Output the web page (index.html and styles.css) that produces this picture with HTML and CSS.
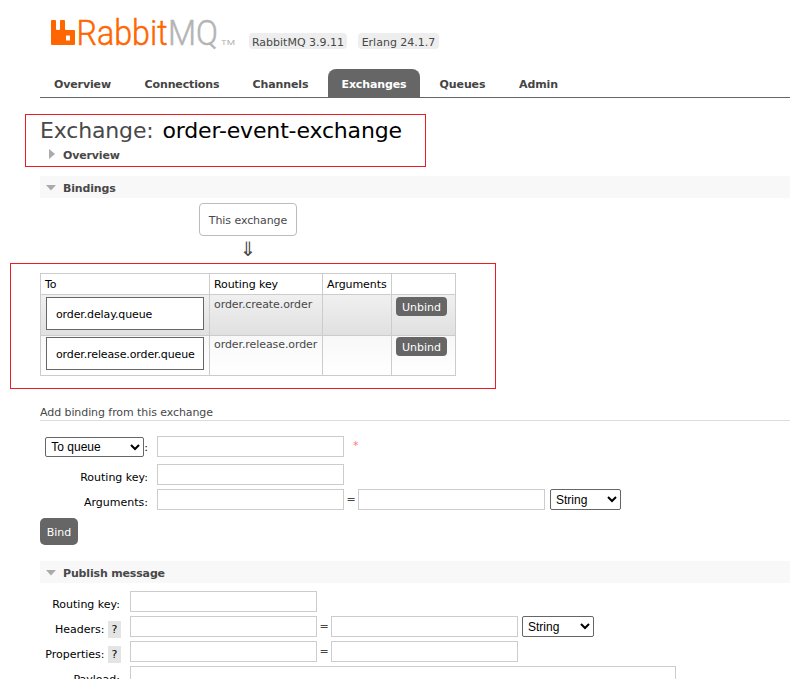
FILE: index.html
```html
<!DOCTYPE html>
<html lang="en">
<head>
<meta charset="utf-8">
<title>RabbitMQ Management</title>
<link rel="stylesheet" href="styles.css">
</head>
<body>
<header class="top">
  <svg class="logo" width="186" height="44" viewBox="0 -6 186 44">
    <path fill="#f60" d="M1 5q0-1 1-1h3q1 0 1 1v8q0 1 1 1h2q1 0 1-1V5q0-1 1-1h3q1 0 1 1v8q0 1 1 1h8q1 0 1 1v13q0 1-1 1H2q-1 0-1-1zM16 20v4q0 .5.5.5h3q.5 0 .5-.5v-4q0-.5-.5-.5h-3q-.5 0-.5.5z"/>
    <text class="word rabbit" x="26.500" y="29" textLength="91" lengthAdjust="spacingAndGlyphs">Rabbit</text>
    <text class="word mq" x="118" y="29" textLength="50" lengthAdjust="spacingAndGlyphs">MQ</text>
    <text class="tm" x="171" y="29" textLength="14" lengthAdjust="spacingAndGlyphs">TM</text>
  </svg>
  <span class="version v1">RabbitMQ 3.9.11</span>
  <span class="version v2">Erlang 24.1.7</span>
</header>
<nav class="tabs">
  <a class="t1">Overview</a><a class="t2">Connections</a><a class="t3">Channels</a><a class="t4 selected">Exchanges</a><a class="t5">Queues</a><a class="t6">Admin</a>
</nav>
<main>
  <div class="title-frame">
    <h1>Exchange: <b>order-event-exchange</b></h1>
    <h2 class="closed"><svg width="6" height="10"><path fill="#aaa" d="M0 0l6 5-6 5z"/></svg><span>Overview</span></h2>
  </div>
  <h2 class="bar"><svg width="10" height="6"><path fill="#aaa" d="M0 0h10L5 5.500z"/></svg><span>Bindings</span></h2>
  <div class="source">
    <span class="exchange">This exchange</span>
    <span class="arrow">⇓</span>
  </div>
  <div class="table-frame">
    <table>
      <colgroup><col class="c1"><col class="c2"><col class="c3"><col class="c4"></colgroup>
      <tr class="head"><th>To</th><th>Routing key</th><th>Arguments</th><th></th></tr>
      <tr class="alt1"><td><span class="queue">order.delay.queue</span></td><td>order.create.order</td><td></td><td><button class="small">Unbind</button></td></tr>
      <tr class="alt2"><td><span class="queue">order.release.order.queue</span></td><td>order.release.order</td><td></td><td><button class="small">Unbind</button></td></tr>
    </table>
  </div>
  <h3>Add binding from this exchange</h3>
  <form class="bind">
    <div class="row first"><label><select class="to"><option>To queue</option></select>:</label><input><span class="star">*</span></div>
    <div class="row"><label>Routing key:</label><input></div>
    <div class="row"><label>Arguments:</label><input><span class="eq">=</span><input><select class="type"><option>String</option></select></div>
    <button class="submit" type="button">Bind</button>
  </form>
  <h2 class="bar"><svg width="10" height="6"><path fill="#aaa" d="M0 0h10L5 5.500z"/></svg><span>Publish message</span></h2>
  <form class="publish">
    <div class="row"><label>Routing key:</label><input></div>
    <div class="row"><label>Headers: <span class="help">?</span></label><input><span class="eq">=</span><input><select class="type"><option>String</option></select></div>
    <div class="row"><label>Properties: <span class="help">?</span></label><input><span class="eq">=</span><input></div>
    <div class="row last"><label>Payload:</label><textarea></textarea></div>
  </form>
</main>
</body>
</html>
```

FILE: styles.css
```css
* { box-sizing: border-box; }
html, body { height: 679px; overflow: hidden; }
body { margin: 0; background: #fff; color: #484848; font: 11px/16px Verdana, "DejaVu Sans", sans-serif; letter-spacing: -.08px; }
.top { display: flex; height: 69px; padding: 10px 0 0 50px; align-items: flex-start; }
.logo { display: block; flex: none; letter-spacing: 0; }
.word { font-family: Roboto, sans-serif; font-size: 35px; font-weight: 300; }
.rabbit { fill: #f60; stroke: #f60; stroke-width: .5px; }
.mq { fill: #b4b4b4; stroke: #b4b4b4; stroke-width: .5px; }
.tm { fill: #b4b4b4; font: 8px Roboto, sans-serif; }
.version { height: 16px; margin-top: 23px; border-radius: 4px; background: #eee; text-align: center; line-height: 19px; white-space: nowrap; letter-spacing: 0; }
.v1 { width: 98px; margin-left: 13px; }
.v2 { width: 81px; margin-left: 11px; }
.tabs { display: flex; gap: 6px; height: 29px; margin-left: 40px; border-bottom: 1px solid #666; }
.tabs a { height: 28px; border-radius: 8px 8px 0 0; font-weight: bold; line-height: 31px; text-align: center; letter-spacing: -.12px; color: #444; }
.tabs .selected { background: #666; color: #fff; }
.t1 { width: 85px; } .t2 { width: 102px; } .t3 { width: 83px; } .t4 { width: 92px; } .t5 { width: 73px; } .t6 { width: 67px; }
.title-frame { width: 401px; height: 53px; margin: 16px 0 9px 25px; padding-left: 14px; border: 1px solid #ed1c24; }
h1 { margin: 0; font-size: 22px; font-weight: normal; line-height: 32px; height: 31px; white-space: nowrap; letter-spacing: -.15px; }
h1 b { color: #000; font-weight: normal; margin-left: 2px; }
h2 { display: flex; align-items: center; margin: 0; font-size: 11px; line-height: 18px; letter-spacing: -.16px; }
h2 span { padding-top: 2px; }
.closed { padding-left: 9px; height: 16px; }
.closed svg { margin-right: 8px; }
.closed span { padding-top: 3px; }
.bar { height: 22px; margin-left: 40px; padding: 2px 0 0 6px; background: #f8f8f8; }
.bar svg { margin-right: 7px; }
.source { display: flex; flex-direction: column; align-items: center; width: 98px; height: 65px; margin-left: 199px; padding-top: 5px; }
.exchange { width: 98px; height: 33px; border: 1px solid #bbb; border-radius: 4px; line-height: 33px; text-align: center; }
.arrow { font-size: 20px; line-height: 26px; }
.table-frame { width: 486px; height: 126px; margin-left: 10px; padding: 9px 0 0 29px; border: 1px solid #ed1c24; }
table { width: 416px; border-collapse: collapse; table-layout: fixed; }
.c1 { width: 169px; } .c2 { width: 113px; } .c3 { width: 69px; } .c4 { width: 64px; }
th, td { border: 1px solid #ccc; padding: 2px 4px; text-align: left; vertical-align: top; font-weight: normal; white-space: nowrap; }
th { padding: 2px 4px 0; color: #000; line-height: 18px; height: 21px; }
td { height: 40px; padding-bottom: 3px; line-height: 15px; }
.alt1 { height: 41px; background: linear-gradient(#f0f0f0, #e0e0e0); }
.alt2 { background: linear-gradient(#f8f8f8, #fff); }
td:first-child { padding: 2px 5px 4px; }
.alt2 td { padding-top: 1px; }
.alt2 td:first-child { padding: 1px 5px 5px; }
.queue { display: block; width: 158px; height: 33px; padding-left: 9px; border: 1px solid #666; background: #fff; color: #000; line-height: 33px; letter-spacing: -.12px; }
button { display: block; padding: 0; border: 0; border-radius: 4px; background: #666; color: #fff; font: 11px "DejaVu Sans", sans-serif; }
.small { width: 51px; height: 19px; padding-top: 1px; }
h3 { height: 32px; margin: 0 0 15px 40px; padding-top: 15px; border-bottom: 1px solid #ddd; font-size: 11px; font-weight: normal; line-height: 17px; }
.bind { height: 125px; margin-left: 40px; }
.row { display: flex; height: 25px; align-items: flex-start; }
.first { height: 28px; }
.last { height: 13px; }
label { flex: none; display: flex; justify-content: flex-end; padding: 5px 9px 0 0; color: #000; line-height: 17px; white-space: pre; letter-spacing: 0; }
.bind label { width: 117px; }
.publish label { width: 90px; padding-right: 10px; }
.first label { padding-top: 1px; line-height: 21px; }
input, textarea { flex: none; display: block; width: 187px; height: 21px; margin: 0; padding: 0; border: 1px solid #ccc; background: #fff; }
textarea { width: 546px; height: 30px; resize: none; }
select { flex: none; height: 21px; margin: 0; padding: 0 0 0 1px; border: 1px solid #666; border-radius: 2px; background-color: #fff; color: #000; font: 12px "Liberation Sans", sans-serif; }
.to { width: 99px; height: 20px; }
.type { width: 71px; margin-left: 5px; }
.eq { width: 14px; text-align: center; line-height: 22px; }
.star { margin-left: 9px; color: #f77; line-height: 20px; }
.submit { width: 38px; height: 27px; margin-top: 4px; padding-top: 1px; border-radius: 5px; }
.publish { margin-left: 40px; padding-top: 8px; }
.publish .type { width: 72px; margin-left: 4px; }
.help { width: 13px; height: 17px; margin-right: -1px; background: #e4e4e4; text-align: center; line-height: 18px; }
```
